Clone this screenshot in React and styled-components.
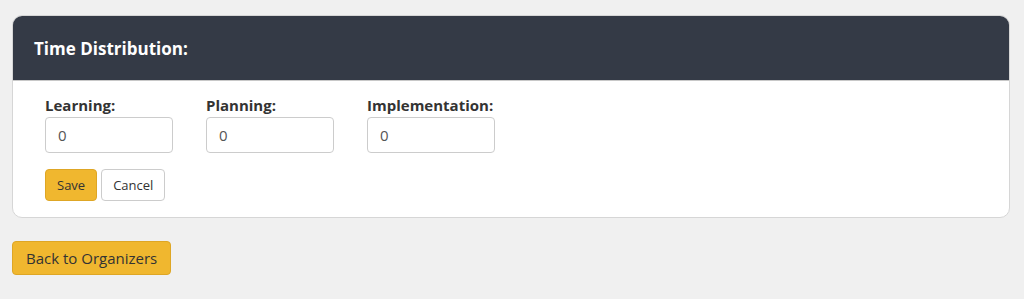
import React from 'react';
import styled, { createGlobalStyle } from 'styled-components';

const GlobalStyle = createGlobalStyle`
  body {
    margin: 0;
    background: #f0f0f0;
    font-family: "Open Sans", "Liberation Sans", sans-serif;
    color: #333;
  }
`

const Page = styled.div`
  padding: 15px 14px 24px 12px;
  display: flex;
  flex-direction: column;
  align-items: flex-start;
  gap: 23px;
`

const Card = styled.section`
  align-self: stretch;
  background: #fff;
  border: 1px solid #d6d6d6;
  border-radius: 10px;
  overflow: hidden;
`

const CardHeader = styled.header`
  height: 64px;
  background: #343a46;
  border-bottom: 1px solid #c8c8c8;
  display: flex;
  align-items: center;
  padding: 0 21px;
`

const CardTitle = styled.h2`
  margin: 0;
  font-size: 17px;
  font-weight: 700;
  color: #fff;
`

const CardBody = styled.div`
  padding: 14px 32px 16px;
  display: flex;
  flex-direction: column;
  gap: 16px;
`

const FieldRow = styled.div`
  display: flex;
  gap: 33px;
`

const Field = styled.div`
  display: flex;
  flex-direction: column;
  gap: 2px;
`

const Label = styled.label`
  font-size: 15px;
  font-weight: 700;
  color: #333;
  line-height: 20px;
`

const Input = styled.input`
  box-sizing: border-box;
  width: 128px;
  height: 36px;
  border: 1px solid #ccc;
  border-radius: 4px;
  padding: 0 12px;
  font-family: inherit;
  font-size: 15px;
  color: #555;
  outline: none;
`

const Actions = styled.div`
  display: flex;
  gap: 4px;
`

const Button = styled.button`
  box-sizing: border-box;
  height: ${p => p.$large ? '34px' : '32px'};
  padding: 0 ${p => p.$large ? '13px' : '11px'};
  border-radius: 4px;
  font-family: inherit;
  font-size: ${p => p.$large ? '15px' : '13px'};
  color: #333;
  background: ${p => p.$primary ? '#f0b72f' : '#fff'};
  border: 1px solid ${p => p.$primary ? '#dea625' : '#ccc'};
  cursor: pointer;
`

const App = () => {
  return (
    <>
      <GlobalStyle />
      <Page>
        <Card>
          <CardHeader>
            <CardTitle>Time Distribution:</CardTitle>
          </CardHeader>
          <CardBody>
            <FieldRow>
              <Field>
                <Label htmlFor="learning">Learning:</Label>
                <Input id="learning" defaultValue="0" />
              </Field>
              <Field>
                <Label htmlFor="planning">Planning:</Label>
                <Input id="planning" defaultValue="0" />
              </Field>
              <Field>
                <Label htmlFor="implementation">Implementation:</Label>
                <Input id="implementation" defaultValue="0" />
              </Field>
            </FieldRow>
            <Actions>
              <Button $primary>Save</Button>
              <Button>Cancel</Button>
            </Actions>
          </CardBody>
        </Card>
        <Button $primary $large>Back to Organizers</Button>
      </Page>
    </>
  )
}

export default App
